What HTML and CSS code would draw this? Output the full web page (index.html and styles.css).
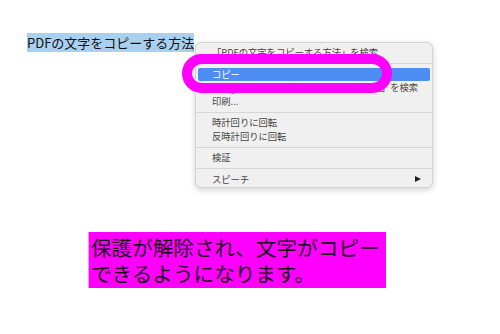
FILE: index.html
```html
<!DOCTYPE html>
<html lang="ja">
<head>
<meta charset="utf-8">
<link rel="stylesheet" href="styles.css">
</head>
<body>
<div class="page">
  <div class="title"><span class="sel">PDFの文字をコピーする方法</span></div>
  <div class="note">
    <div class="line">保護が解除され、文字がコピー</div>
    <div class="line">できるようになります。</div>
  </div>
</div>
<div class="menu">
  <div class="item">「PDFの文字をコピーする方法」を検索</div>
  <div class="sep"></div>
  <div class="item active">コピー</div>
  <div class="item">Googleで「PDFの文字をコピーする方法」を検索</div>
  <div class="item">印刷...</div>
  <div class="sep"></div>
  <div class="item">時計回りに回転</div>
  <div class="item">反時計回りに回転</div>
  <div class="sep"></div>
  <div class="item">検証</div>
  <div class="sep"></div>
  <div class="item sub">スピーチ<span class="arrow"></span></div>
</div>
<div class="ring"></div>
</body>
</html>
```

FILE: styles.css
```css
html, body {
  margin: 0;
  padding: 0;
  background: #ffffff;
}
body {
  width: 500px;
  height: 334px;
  overflow: hidden;
  font-family: "Noto Sans CJK JP", "Noto Sans", sans-serif;
  position: relative;
}
.page {
  display: flex;
  flex-direction: column;
  align-items: flex-start;
  padding: 35px 0 0 27px;
}
.title {
  font-size: 13px;
  line-height: 16px;
  color: #111;
}
.sel {
  background: #a9d0ef;
}
.note {
  margin: 181px 0 0 61px;
  width: 298px;
  box-sizing: border-box;
  padding: 2px 2px;
  background: #ff00ff;
  border-left: 1px solid #f39af3;
  color: #1a0a1a;
  font-size: 20.6px;
}
.line {
  height: 26px;
  line-height: 26px;
  white-space: nowrap;
}
.menu {
  position: absolute;
  left: 195px;
  top: 42px;
  width: 238px;
  height: 146px;
  box-sizing: border-box;
  padding: 3px 0;
  background: #f0f0f0;
  border: 1px solid #d2d2d2;
  border-radius: 6px;
  box-shadow: 0 2px 6px rgba(0, 0, 0, 0.18);
  font-size: 9.3px;
  color: #444444;
}
.item {
  height: 13.5px;
  line-height: 13.5px;
  padding-left: 14px;
  margin: 0 2px;
  border-radius: 2px;
  white-space: nowrap;
  display: flex;
  align-items: center;
}
.item.active {
  background: #4d8ef5;
  color: #ffffff;
}
.sub {
  justify-content: space-between;
  padding-right: 9px;
}
.arrow {
  width: 0;
  height: 0;
  border-top: 3.5px solid transparent;
  border-bottom: 3.5px solid transparent;
  border-left: 6px solid #222;
}
.sep {
  height: 8px;
  display: flex;
  align-items: center;
}
.sep::before {
  content: "";
  flex: 1;
  height: 1px;
  background: #d6d6d6;
}
.ring {
  position: absolute;
  left: 182px;
  top: 54px;
  width: 210px;
  height: 39px;
  box-sizing: border-box;
  border: 10px solid #ff00ff;
  border-radius: 20px;
}
```
